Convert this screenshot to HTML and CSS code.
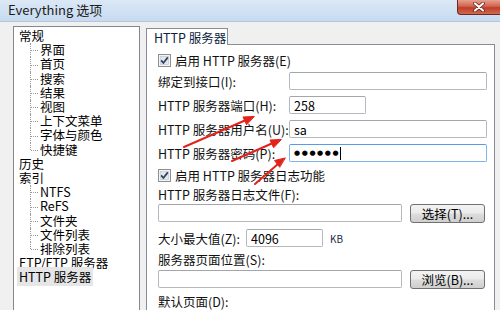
FILE: index.html
```html
<!DOCTYPE html>
<html lang="zh">
<head>
<meta charset="utf-8">
<title>Everything 选项</title>
<link rel="stylesheet" href="styles.css">
</head>
<body>
<div class="window">
  <div class="titlebar">
    <span class="title">Everything 选项</span>
    <div class="close">
      <svg width="16" height="10" viewBox="0 0 16 10"><path d="M4 1.5 L12 8.5 M12 1.5 L4 8.5" stroke="#5a1d16" stroke-width="3.6" stroke-linecap="round"/><path d="M4 1.5 L12 8.5 M12 1.5 L4 8.5" stroke="#fff" stroke-width="2.2" stroke-linecap="round"/></svg>
    </div>
  </div>
  <div class="main">
    <div class="tree">
      <div class="node">常规</div>
      <div class="children">
        <div class="leaf">界面</div>
        <div class="leaf">首页</div>
        <div class="leaf">搜索</div>
        <div class="leaf">结果</div>
        <div class="leaf">视图</div>
        <div class="leaf">上下文菜单</div>
        <div class="leaf">字体与颜色</div>
        <div class="leaf">快捷键</div>
      </div>
      <div class="node">历史</div>
      <div class="node">索引</div>
      <div class="children">
        <div class="leaf">NTFS</div>
        <div class="leaf">ReFS</div>
        <div class="leaf">文件夹</div>
        <div class="leaf">文件列表</div>
        <div class="leaf">排除列表</div>
      </div>
      <div class="node">ETP/FTP 服务器</div>
      <div class="node"><span class="sel">HTTP 服务器</span></div>
    </div>
    <div class="tabarea">
      <div class="tabstrip"><div class="tab">HTTP 服务器</div></div>
      <div class="panel">
        <div class="row r-a"><span class="cb"><svg width="13" height="13" viewBox="0 0 13 13"><rect x="0.5" y="0.5" width="12" height="12" fill="#f4f4f4" stroke="#8e8f8f"/><rect x="2.5" y="2.5" width="8" height="8" fill="#e3e6ea" stroke="#c0c4c9" stroke-width="0.6"/><path d="M3.2 6.4 L5.4 9 L9.8 3.4" fill="none" stroke="#2a3f68" stroke-width="1.7"/></svg></span><span>启用 HTTP 服务器(E)</span></div>
        <div class="row r-b"><span class="lbl">绑定到接口(I):</span><span class="inp wide"></span></div>
        <div class="row r-c"><span class="lbl">HTTP 服务器端口(H):</span><span class="inp short">258</span></div>
        <div class="row r-c"><span class="lbl">HTTP 服务器用户名(U):</span><span class="inp wide">sa</span></div>
        <div class="row r-c"><span class="lbl">HTTP 服务器密码(P):</span><span class="inp wide focus"><span class="dots">●●●●●●</span><span class="caret"></span></span></div>
        <div class="row r-f"><span class="cb"><svg width="13" height="13" viewBox="0 0 13 13"><rect x="0.5" y="0.5" width="12" height="12" fill="#f4f4f4" stroke="#8e8f8f"/><rect x="2.5" y="2.5" width="8" height="8" fill="#e3e6ea" stroke="#c0c4c9" stroke-width="0.6"/><path d="M3.2 6.4 L5.4 9 L9.8 3.4" fill="none" stroke="#2a3f68" stroke-width="1.7"/></svg></span><span>启用 HTTP 服务器日志功能</span></div>
        <div class="row label r-g">HTTP 服务器日志文件(F):</div>
        <div class="row r-h"><span class="inp file"></span><span class="btn">选择(T)...</span></div>
        <div class="row r-i"><span class="lbl small">大小最大值(Z):</span><span class="inp short">4096</span><span class="kb">KB</span></div>
        <div class="row label r-j">服务器页面位置(S):</div>
        <div class="row r-k"><span class="inp file"></span><span class="btn">浏览(B)...</span></div>
        <div class="row label r-l">默认页面(D):</div>
      </div>
    </div>
  </div>
  <svg class="arrows" width="500" height="310" viewBox="0 0 500 310">
    <g stroke="#e3221b" stroke-width="2" stroke-linecap="round" fill="#e3221b">
      <line x1="184" y1="147" x2="246" y2="120"/>
      <polygon points="254,116.5 243,117 246.5,124.5" stroke-width="1"/>
      <line x1="232" y1="161" x2="273" y2="143"/>
      <polygon points="281,139.5 270,140 273.5,147.5" stroke-width="1"/>
      <line x1="255" y1="184" x2="278" y2="164"/>
      <polygon points="285,158 274.5,160.5 279.5,167" stroke-width="1"/>
    </g>
  </svg>
</div>
</body>
</html>
```
FILE: styles.css
```css
html, body {
  margin: 0;
  padding: 0;
}
body {
  background: #f0f0f0;
  font-family: "Noto Sans CJK SC", "Noto Sans", sans-serif;
  font-size: 12.5px;
  color: #111;
}
.window {
  width: 500px;
  height: 310px;
  position: relative;
  overflow: hidden;
  background: #f0f0f0;
}
.titlebar {
  height: 21px;
  border-bottom: 1px solid #b4c6dc;
  background: linear-gradient(to bottom, #dbe8f6 0%, #cfe0f3 60%, #c6daf0 100%);
  display: flex;
  align-items: flex-start;
}
.title {
  margin: 2px 0 0 8px;
  line-height: 16px;
  color: #1b1b1b;
  font-size: 13px;
}
.close {
  margin-left: auto;
  width: 42px;
  height: 14px;
  border: 1px solid #6d2a22;
  border-top: none;
  border-right: none;
  border-radius: 0 0 0 4px;
  background: linear-gradient(to bottom, #e7a08f 0%, #d2624f 45%, #c03d27 55%, #cf6a4f 100%);
  display: flex;
  align-items: center;
  justify-content: center;
}
.main {
  display: flex;
  gap: 6px;
  padding: 4px 0 0 13px;
}
.tree {
  width: 120px;
  height: 300px;
  border: 1px solid #828790;
  background: #fff;
  padding: 2px 0 0 5px;
  line-height: 14.2px;
  color: #000;
}
.node {
  white-space: nowrap;
}
.sel {
  background: #e6e6e6;
  padding: 0 2px;
  margin-left: -2px;
}
.children .leaf {
  position: relative;
  padding-left: 21px;
  white-space: nowrap;
}
.leaf::before {
  content: "";
  position: absolute;
  left: 11px;
  top: 0;
  bottom: 0;
  border-left: 1px dotted #9a9a9a;
}
.leaf:last-child::before {
  bottom: 50%;
}
.leaf::after {
  content: "";
  position: absolute;
  left: 12px;
  top: 50%;
  width: 7px;
  border-top: 1px dotted #9a9a9a;
}
.tabarea {
  width: 349px;
}
.tabstrip {
  display: flex;
  padding-top: 2px;
}
.tab {
  width: 82px;
  height: 17px;
  box-sizing: border-box;
  border: 1px solid #898c95;
  border-bottom: none;
  background: #fff;
  padding-left: 7px;
  line-height: 17px;
  color: #0e1e40;
  margin-bottom: -1px;
  position: relative;
  z-index: 1;
}
.panel {
  height: 300px;
  border: 1px solid #898c95;
  background: #fff;
  padding: 6px 7px 0 11px;
  box-sizing: border-box;
  display: flex;
  flex-direction: column;
}
.row {
  display: flex;
  align-items: center;
  height: 18px;
  white-space: nowrap;
  color: #111;
}
.row.label {
  height: 16px;
}
.r-b { margin-top: 3px; }
.r-c { margin-top: 6px; }
.r-f { margin-top: 4px; }
.r-g { margin-top: 2px; }
.r-h { margin-top: 2px; }
.r-i { margin-top: 7px; }
.r-j { margin-top: 4px; }
.r-k { margin-top: 3px; }
.r-l { margin-top: 5px; }
.cb {
  width: 13px;
  height: 13px;
  margin-right: 4px;
  display: flex;
}
.lbl {
  width: 131px;
  flex: none;
}
.lbl.small {
  width: 88px;
}
.inp {
  height: 18px;
  box-sizing: border-box;
  border: 1px solid #b5b8bf;
  border-top-color: #a3a6ad;
  border-radius: 2px;
  background: #fff;
  padding: 0 4px;
  display: flex;
  align-items: center;
  color: #000;
}
.inp.wide { flex: 1; }
.inp.short { width: 77px; }
.inp.file { width: 244px; }
.inp.focus {
  border-color: #7eb4ea;
  border-top-color: #569de5;
}
.dots {
  font-family: "DejaVu Sans", sans-serif;
  font-size: 7px;
  letter-spacing: 1.6px;
  color: #000;
}
.caret {
  width: 1px;
  height: 13px;
  background: #000;
  margin-left: 0px;
}
.btn {
  margin-left: 8px;
  width: 75px;
  height: 19px;
  box-sizing: border-box;
  border: 1px solid #707070;
  border-radius: 3px;
  background: linear-gradient(to bottom, #f3f3f3 0%, #ebebeb 48%, #dddddd 52%, #cfcfcf 100%);
  text-align: center;
  line-height: 17px;
  color: #000;
}
.kb {
  margin-left: 7px;
  font-size: 10px;
  color: #1c2a4a;
}
.arrows {
  position: absolute;
  left: 0;
  top: 0;
  pointer-events: none;
}
```
